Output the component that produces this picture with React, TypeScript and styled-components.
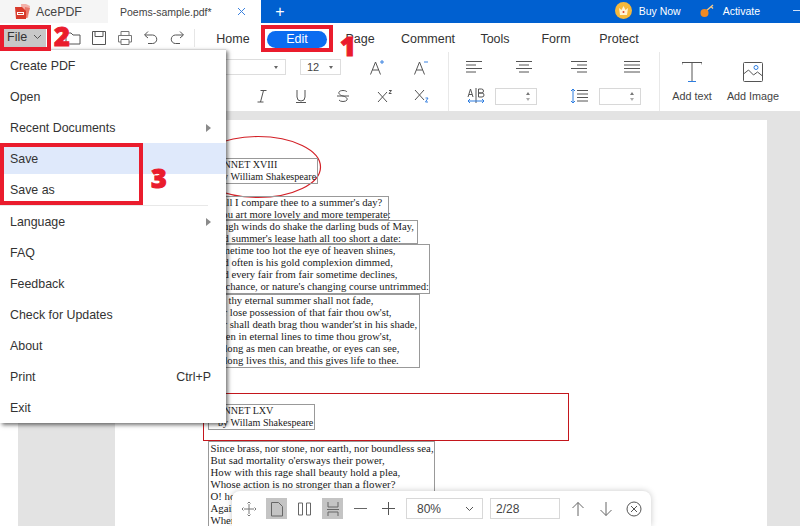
import React from "react";
import styled, { createGlobalStyle } from "styled-components";

const GlobalStyle = createGlobalStyle`
  html, body {
    margin: 0;
    padding: 0;
    background: #fff;
  }
  * {
    box-sizing: border-box;
  }
`;

const Shell = styled.div`
  position: relative;
  width: 800px;
  height: 526px;
  overflow: hidden;
  display: flex;
  flex-direction: column;
  font-family: "Liberation Sans", Arial, sans-serif;
  color: #333;
`;

/* title bar */
const TitleBar = styled.header`
  display: flex;
  align-items: center;
  height: 23px;
  background: #0060d0;
  color: #fff;
  font-size: 10.5px;
`;

const Brand = styled.div`
  display: flex;
  align-items: center;
  gap: 5px;
  width: 108px;
  height: 100%;
  padding-left: 14px;
  background: #f5f5f5;
  color: #444;
  font-size: 12.3px;
`;

const DocTab = styled.div`
  display: flex;
  align-items: center;
  justify-content: space-between;
  width: 153px;
  height: 100%;
  padding: 0 15px 0 12px;
  background: #fff;
  color: #444;
  font-size: 10.5px;
`;

const NewTab = styled.span`
  width: 38px;
  text-align: center;
  font-size: 16px;
`;

const TitleActions = styled.div`
  display: flex;
  align-items: center;
  margin-left: auto;
  padding-bottom: 2px;
`;

const TitleAction = styled.span<{ $gap: number; $right: number }>`
  display: flex;
  align-items: center;
  gap: ${({ $gap }) => $gap}px;
  margin-right: ${({ $right }) => $right}px;
`;

const WindowDash = styled.span`
  width: 7px;
  height: 1px;
  background: #cfe0f7;
`;

/* menu row */
const MenuRow = styled.div`
  display: flex;
  align-items: center;
  height: 29px;
  padding-left: 4px;
`;

const FileButton = styled.div`
  display: flex;
  align-items: center;
  justify-content: space-between;
  width: 42px;
  height: 18px;
  padding: 0 4px 2px 3px;
  background: #c8c8c8;
  font-size: 12.5px;
`;

const QuickIcons = styled.div`
  display: flex;
  gap: 8px;
  margin-left: 18px;
  width: 130px;
`;

const QuickDivider = styled.span`
  width: 1px;
  height: 18px;
  background: #e6e6e6;
  margin-right: 4px;
`;

const Tab = styled.div<{ $width: number; $active?: boolean }>`
  width: ${({ $width }) => $width}px;
  height: 17px;
  margin-top: 3px;
  line-height: 17px;
  text-align: center;
  font-size: 12.5px;
  border-radius: 9px;
  color: ${({ $active }) => ($active ? "#fff" : "#333")};
  background: ${({ $active }) => ($active ? "#0b6cf0" : "transparent")};
`;

/* ribbon */
const Toolbar = styled.div`
  display: flex;
  height: 59px;
  background: #fff;
`;

const ToolGroup = styled.div<{ $width: number }>`
  display: flex;
  flex-direction: column;
  gap: 13px;
  width: ${({ $width }) => $width}px;
  padding-top: 7px;
  border-right: 1px solid #e8e8e8;
`;

const ToolRow = styled.div<{ $end?: boolean; $pad?: number }>`
  display: flex;
  align-items: center;
  height: 16px;
  justify-content: ${({ $end }) => ($end ? "flex-end" : "flex-start")};
  padding: ${({ $end, $pad = 0 }) => ($end ? `0 ${$pad}px 0 0` : `0 0 0 ${$pad}px`)};
`;

const Select = styled.div<{ $width: number; $right?: number }>`
  display: flex;
  align-items: center;
  justify-content: space-between;
  width: ${({ $width }) => $width}px;
  height: 16px;
  margin-right: ${({ $right = 0 }) => $right}px;
  padding: 0 7px 0 6px;
  border: 1px solid #ddd;
  font-size: 11px;
  color: #444;
`;

const Caret = styled.span`
  width: 0;
  height: 0;
  border-left: 2.5px solid transparent;
  border-right: 2.5px solid transparent;
  border-top: 3px solid #666;
`;

const IconCell = styled.div<{ $width: number; $left?: number }>`
  display: flex;
  align-items: center;
  justify-content: center;
  width: ${({ $width }) => $width}px;
  margin-left: ${({ $left = 0 }) => $left}px;
  height: 16px;
`;

const Spinner = styled.div`
  display: flex;
  flex-direction: column;
  align-items: flex-end;
  justify-content: center;
  gap: 3px;
  width: 42px;
  height: 17px;
  padding-right: 6px;
  border: 1px solid #d8d8d8;
`;

const SpinUp = styled.span`
  border-left: 2px solid transparent;
  border-right: 2px solid transparent;
  border-bottom: 3px solid #777;
`;

const SpinDown = styled.span`
  border-left: 2px solid transparent;
  border-right: 2px solid transparent;
  border-top: 3px solid #aaa;
`;

const InsertGroup = styled.div`
  display: flex;
  padding-left: 12px;
`;

const InsertItem = styled.div<{ $width: number; $left?: number }>`
  display: flex;
  flex-direction: column;
  align-items: center;
  gap: 8px;
  width: ${({ $width }) => $width}px;
  margin-left: ${({ $left = 0 }) => $left}px;
  padding-top: 10px;
  font-size: 10.8px;
  color: #444;
`;

/* document area */
const Viewer = styled.main`
  flex: 1;
  display: flex;
  min-height: 0;
  background: #e3e3e3;
`;

const SideRail = styled.div`
  width: 18px;
  background: #fff;
`;

const Sheet = styled.div`
  position: relative;
  width: 652px;
  margin: 9px 0 0 97px;
  background: #fff;
  font-family: "Liberation Serif", "Times New Roman", serif;
  line-height: 12px;
  color: #1a1a1a;
`;

const TextBox = styled.div<{ $x: number; $y: number; $w: number; $h: number; $size: number }>`
  position: absolute;
  left: ${({ $x }) => $x}px;
  top: ${({ $y }) => $y}px;
  width: ${({ $w }) => $w}px;
  height: ${({ $h }) => $h}px;
  padding: 0 0 0 1.5px;
  border: 1px solid #999;
  font-size: ${({ $size }) => $size}px;
  white-space: nowrap;
`;

const RedRect = styled.div`
  position: absolute;
  left: 88px;
  top: 273px;
  width: 366px;
  height: 48px;
  border: 1px solid #c4161c;
`;

const Ellipse = styled.svg`
  position: absolute;
  left: 75px;
  top: 14px;
`;

/* file menu */
const FileMenu = styled.nav`
  position: absolute;
  left: 0;
  top: 49px;
  width: 226px;
  background: #fff;
  border-top: 1px solid #d4d4d4;
  box-shadow: 2px 2px 4px rgba(0, 0, 0, 0.55);
  font-size: 12.4px;
`;

const MenuItem = styled.div<{ $active?: boolean }>`
  display: flex;
  align-items: center;
  justify-content: space-between;
  height: 31px;
  padding: 0 15px 0 10px;
  background: ${({ $active }) => ($active ? "#dfe9fb" : "transparent")};
`;

const MenuDivider = styled.div`
  width: 208px;
  height: 1px;
  background: #e8e8e8;
`;

const SubArrow = styled.span`
  border-top: 4px solid transparent;
  border-bottom: 4px solid transparent;
  border-left: 5px solid #8a8a8a;
`;

/* bottom page bar */
const PageBar = styled.div`
  position: absolute;
  left: 232px;
  bottom: 0;
  display: flex;
  align-items: center;
  gap: 7px;
  width: 419px;
  height: 35px;
  padding: 0 6px;
  background: #fff;
  border-radius: 8px 8px 0 0;
  box-shadow: 0 0 6px rgba(0, 0, 0, 0.22);
`;

const BarButton = styled.div<{ $on?: boolean }>`
  display: flex;
  align-items: center;
  justify-content: center;
  width: 21px;
  height: 21px;
  background: ${({ $on }) => ($on ? "#c4c4c4" : "transparent")};
`;

const BarField = styled.div<{ $width: number }>`
  display: flex;
  align-items: center;
  justify-content: space-between;
  width: ${({ $width }) => $width}px;
  height: 21px;
  padding: 0 8px 0 5px;
  border: 1px solid #d8d8d8;
  font-size: 12px;
  color: #444;
`;

const ZoomValue = styled.span`
  margin-left: 5px;
`;

/* red tutorial marks laid over the screenshot */
const MarkBox = styled.div<{ $x: number; $y: number; $w: number; $h: number }>`
  position: absolute;
  left: ${({ $x }) => $x}px;
  top: ${({ $y }) => $y}px;
  width: ${({ $w }) => $w}px;
  height: ${({ $h }) => $h}px;
  border: 4px solid #ea1c2d;
`;

const MarkNumber = styled.span<{ $x: number; $y: number }>`
  position: absolute;
  left: ${({ $x }) => $x}px;
  top: ${({ $y }) => $y}px;
  font-family: "Open Sans", sans-serif;
  font-weight: 800;
  font-size: 27px;
  line-height: 27px;
  -webkit-text-stroke: 1px #ea1c2d;
  color: #ea1c2d;
`;

const Line = styled.line`
  stroke: currentColor;
`;

const Glyph = ({ w = 18, h = 18, color = "#555", children }: { w?: number; h?: number; color?: string; children: React.ReactNode }) => (
  <svg width={w} height={h} viewBox={`0 0 ${w} ${h}`} fill="none" stroke={color} strokeWidth={1} style={{ color }}>
    {children}
  </svg>
);

const Logo = () => (
  <svg width="17" height="16" viewBox="0 0 17 16">
    <path d="M7 0h5l4 2-2 12-6-1z" fill="#f3b0a8" />
    <path d="M11 3l5 1-3 10-3-1z" fill="#e9786b" />
    <path d="M1 3h7l4 4v8H2z" fill="#d83a2b" />
    <path d="M3 8h7v3H3z" fill="#fff" />
    <path d="M4 9h5v1H4z" fill="#d83a2b" />
  </svg>
);

const Crown = () => (
  <svg width="17" height="17" viewBox="0 0 17 17">
    <circle cx="8.5" cy="8.5" r="8.5" fill="#f6b93b" />
    <path d="M4 6l2.500 2L8.500 4l2 4L13 6l-1 7H5z" fill="#fff3d6" />
    <circle cx="8.500" cy="10" r="1" fill="#e0452c" />
  </svg>
);

const KeyIcon = () => (
  <svg width="16" height="15" viewBox="0 0 16 15">
    <path d="M6 8l7-6M11 3.500l2 2" stroke="#f5c98a" strokeWidth="1.3" fill="none" />
    <circle cx="4.500" cy="10" r="4" fill="#f08a24" />
  </svg>
);

const Chevron = () => (
  <svg width="9" height="6" viewBox="0 0 9 6" fill="none" stroke="#555" strokeWidth="1">
    <path d="M1 1l3.500 3.500L8 1" />
  </svg>
);

const LetterA = ({ mark }: { mark: string }) => (
  <svg width="15" height="16" viewBox="0 0 15 16" fill="none" stroke="#555">
    <path d="M1.500 15.500L6.500 3l5 12.500M3.300 11h6.400" />
    <path d={mark} stroke="#3b82e0" />
  </svg>
);

const TextLines = ({ rows }: { rows: [number, number][] }) => (
  <Glyph w={18} h={14}>
    {rows.map(([x1, x2], i) => (
      <Line key={i} x1={x1} x2={x2} y1={1.5 + i * 3.5} y2={1.5 + i * 3.5} />
    ))}
  </Glyph>
);

const tabs: { label: string; width: number; active?: boolean }[] = [
  { label: "Home", width: 68 },
  { label: "Edit", width: 60, active: true },
  { label: "Page", width: 66 },
  { label: "Comment", width: 70 },
  { label: "Tools", width: 64 },
  { label: "Form", width: 58 },
  { label: "Protect", width: 68 },
];

const sonnetTop = [
  ["Shall I compare thee to a summer's day?", "Thou art more lovely and more temperate:"],
  ["Rough winds do shake the darling buds of May,", "And summer's lease hath all too short a date:"],
  [
    "Sometime too hot the eye of heaven shines,",
    "And often is his gold complexion dimmed,",
    "And every fair from fair sometime declines,",
    "By chance, or nature's changing course untrimmed:",
  ],
  [
    "But thy eternal summer shall not fade,",
    "Nor lose possession of that fair thou ow'st,",
    "Nor shall death brag thou wander'st in his shade,",
    "When in eternal lines to time thou grow'st,",
    "So long as men can breathe, or eyes can see,",
    "So long lives this, and this gives life to thee.",
  ],
];

const titleSize = 10.1;
const upperVerse = 10.65;
const lowerVerse = 10.8;

const boxes = [
  { x: 93, y: 38, w: 110, h: 26, size: titleSize, lines: ["SONNET XVIII", "\u00a0\u00a0\u00a0by William Shakespeare"] },
  { x: 93, y: 76, w: 181, h: 24, size: upperVerse, lines: sonnetTop[0] },
  { x: 93, y: 100, w: 210, h: 24, size: upperVerse, lines: sonnetTop[1] },
  { x: 93, y: 124, w: 222, h: 50, size: upperVerse, lines: sonnetTop[2] },
  { x: 93, y: 174, w: 212, h: 74, size: upperVerse, lines: sonnetTop[3] },
  { x: 93, y: 284, w: 107, h: 26, size: titleSize, lines: ["SONNET LXV", "\u00a0\u00a0\u00a0by Willam Shakespeare"] },
  {
    x: 93,
    y: 321,
    w: 227,
    h: 100,
    size: lowerVerse,
    lines: [
      "Since brass, nor stone, nor earth, nor boundless sea,",
      "But sad mortality o'ersways their power,",
      "How with this rage shall beauty hold a plea,",
      "Whose action is no stronger than a flower?",
      "O! how shall summer's honey breath hold out,",
      "Against the wrackful siege of battering days,",
      "When rocks impregnable are not so stout,",
    ],
  },
];

const menuBefore = ["Create PDF", "Open"];
const menuAfter = ["FAQ", "Feedback", "Check for Updates", "About"];

export default function App() {
  return (
    <Shell>
      <GlobalStyle />
      <TitleBar>
        <Brand>
          <Logo />
          AcePDF
        </Brand>
        <DocTab>
          Poems-sample.pdf*
          <svg width="9" height="9" viewBox="0 0 9 9" stroke="#3b82e0" fill="none">
            <path d="M1 1l7 7M8 1l-7 7" />
          </svg>
        </DocTab>
        <NewTab>+</NewTab>
        <TitleActions>
          <TitleAction $gap={7} $right={19}>
            <Crown />
            Buy Now
          </TitleAction>
          <TitleAction $gap={7} $right={33}>
            <KeyIcon />
            Activate
          </TitleAction>
          <WindowDash />
        </TitleActions>
      </TitleBar>

      <MenuRow>
        <FileButton>
          File
          <Chevron />
        </FileButton>
        <QuickIcons>
          <Glyph>
            <path d="M2 15V4h5l2 2h7v9z" />
          </Glyph>
          <Glyph>
            <path d="M2.500 2.500h13v13h-13zM5 2.500v5h8v-5" />
          </Glyph>
          <Glyph color="#777">
            <path d="M5 6V2.500h8V6M5 13H2.500V6.500h13V13H13M5 10.500h8v5H5z" />
          </Glyph>
          <Glyph>
            <path d="M6 2.500L2.500 6 6 9M3 6h7.500a4 4 0 010 8.500H6" />
          </Glyph>
          <Glyph>
            <path d="M12 2.500L15.500 6 12 9M15 6H7.500a4 4 0 000 8.500H12" />
          </Glyph>
        </QuickIcons>
        <QuickDivider />
        {tabs.map((tab) => (
          <Tab key={tab.label} $width={tab.width} $active={tab.active}>
            {tab.label}
          </Tab>
        ))}
      </MenuRow>

      <Toolbar>
        <ToolGroup $width={449}>
          <ToolRow $end $pad={6}>
            <Select $width={120} $right={14}>
              <span />
              <Caret />
            </Select>
            <Select $width={41} $right={13}>
              12
              <Caret />
            </Select>
            <IconCell $width={44}>
              <LetterA mark="M11 3h4M13 1v4" />
            </IconCell>
            <IconCell $width={44}>
              <LetterA mark="M11 3h4" />
            </IconCell>
          </ToolRow>
          <ToolRow $end $pad={6}>
            <IconCell $width={44}>
              <Glyph w={14} h={14}>
                <path d="M5.500 1.500h6M2.500 13h6M8.500 1.500L5.500 13" />
              </Glyph>
            </IconCell>
            <IconCell $width={34}>
              <Glyph w={14} h={14}>
                <path d="M3 1v7a4 4 0 008 0V1M2 13.500h10" />
              </Glyph>
            </IconCell>
            <IconCell $width={50}>
              <Glyph w={14} h={14}>
                <path d="M11 3c-1-2-7-2-8 0s2 3.500 4 4 5 2 4 4-7 2-8 0M1 7h12" />
              </Glyph>
            </IconCell>
            <IconCell $width={34}>
              <Glyph w={16} h={14}>
                <path d="M1 3l9 10M10 3L1 13M12 1.500h2.500l-2.500 3h2.500" />
              </Glyph>
            </IconCell>
            <IconCell $width={40}>
              <Glyph w={16} h={14}>
                <path d="M1 1l9 10M10 1L1 11" />
                <path d="M11.500 9h2.500l-2.500 4H14" stroke="#3b82e0" />
              </Glyph>
            </IconCell>
          </ToolRow>
        </ToolGroup>

        <ToolGroup $width={211}>
          <ToolRow>
            <IconCell $width={49}>
              <TextLines rows={[[1, 17], [1, 11], [1, 17], [1, 11]]} />
            </IconCell>
            <IconCell $width={52}>
              <TextLines rows={[[1, 17], [4, 14], [1, 17], [4, 14]]} />
            </IconCell>
            <IconCell $width={58}>
              <TextLines rows={[[1, 17], [7, 17], [1, 17], [7, 17]]} />
            </IconCell>
            <IconCell $width={48}>
              <TextLines rows={[[1, 17], [1, 17], [1, 17], [1, 17]]} />
            </IconCell>
          </ToolRow>
          <ToolRow $pad={8}>
            <IconCell $width={38}>
              <Glyph w={18} h={16}>
                <path d="M9 0v15" />
                <path d="M1 9l2.500-8L6 9M2 6.500h3M11.500 1v8M11.500 1h3a2 2 0 010 4h-3M11.500 5h3.500a2 2 0 010 4h-3.500" />
                <path d="M1 13h16M3 11l-2 2 2 2M15 11l2 2-2 2" stroke="#2d7de0" />
              </Glyph>
            </IconCell>
            <Spinner>
              <SpinUp />
              <SpinDown />
            </Spinner>
            <IconCell $width={40} $left={22}>
              <Glyph w={18} h={16}>
                <path d="M7 2.500h11M7 6h11M7 9.500h11M7 13h11" />
                <path d="M3 1v14M1 3l2-2 2 2M1 13l2 2 2-2" stroke="#2d7de0" />
              </Glyph>
            </IconCell>
            <Spinner>
              <SpinUp />
              <SpinDown />
            </Spinner>
          </ToolRow>
        </ToolGroup>

        <InsertGroup>
          <InsertItem $width={40}>
            <svg width="20" height="20" viewBox="0 0 20 20" fill="none" stroke="#555">
              <path d="M0 .5h20M0 .5v2M20 .5v2M10 .5v19" />
              <path d="M6 19.500h8" stroke="#2d7de0" />
            </svg>
            Add text
          </InsertItem>
          <InsertItem $width={54} $left={14}>
            <svg width="20" height="20" viewBox="0 0 20 20" fill="none" stroke="#555">
              <rect x=".5" y=".5" width="19" height="19" rx="1" />
              <path d="M.5 12l5-4 5 5 4-3 5 4" />
              <circle cx="13" cy="5.500" r="2" stroke="#2d7de0" />
            </svg>
            Add Image
          </InsertItem>
        </InsertGroup>
      </Toolbar>

      <Viewer>
        <SideRail />
        <Sheet>
          <Ellipse width="134" height="66" viewBox="0 0 134 66" fill="none" stroke="#d32027" strokeWidth="1.2">
            <ellipse cx="68" cy="33" rx="62.500" ry="30.500" />
          </Ellipse>
          <RedRect />
          {boxes.map((box) => (
            <TextBox key={box.y} $x={box.x} $y={box.y} $w={box.w} $h={box.h} $size={box.size}>
              {box.lines.map((line) => (
                <div key={line}>{line}</div>
              ))}
            </TextBox>
          ))}
        </Sheet>
      </Viewer>

      <FileMenu>
        {menuBefore.map((item) => (
          <MenuItem key={item}>{item}</MenuItem>
        ))}
        <MenuItem>
          Recent Documents
          <SubArrow />
        </MenuItem>
        <MenuItem $active>Save</MenuItem>
        <MenuItem>Save as</MenuItem>
        <MenuDivider />
        <MenuItem>
          Language
          <SubArrow />
        </MenuItem>
        {menuAfter.map((item) => (
          <MenuItem key={item}>{item}</MenuItem>
        ))}
        <MenuItem>
          Print
          <span>Ctrl+P</span>
        </MenuItem>
        <MenuItem>Exit</MenuItem>
      </FileMenu>

      <PageBar>
        <BarButton>
          <Glyph w={16} h={16} color="#777">
            <path d="M8 3v10M3 8h10M6.500 2.500L8 1l1.500 1.500M6.500 13.500L8 15l1.500-1.500M2.500 6.500L1 8l1.500 1.500M13.500 6.500L15 8l-1.500 1.500" />
          </Glyph>
        </BarButton>
        <BarButton $on>
          <Glyph w={12} h={16} color="#666">
            <path d="M.5 1.500h7l4 4v9.500h-11z" />
          </Glyph>
        </BarButton>
        <BarButton>
          <Glyph w={13} h={16} color="#666">
            <path d="M.5 2h4v12h-4zM8.500 2h4v12h-4z" />
          </Glyph>
        </BarButton>
        <BarButton $on>
          <Glyph w={14} h={16} color="#666">
            <path d="M2 1v5h10V1M1 8.500h12M2 15v-4h10v4" />
          </Glyph>
        </BarButton>
        <BarButton>
          <Glyph w={15} h={15} color="#666">
            <path d="M1 7.500h13" />
          </Glyph>
        </BarButton>
        <BarButton>
          <Glyph w={15} h={15} color="#555">
            <path d="M1 7.500h13M7.500 1v13" />
          </Glyph>
        </BarButton>
        <BarField $width={77}>
          <ZoomValue>80%</ZoomValue>
          <Chevron />
        </BarField>
        <BarField $width={70}>2/28</BarField>
        <BarButton>
          <Glyph w={14} h={16} color="#666">
            <path d="M7 15V1.500M1.500 7L7 1.500 12.500 7" />
          </Glyph>
        </BarButton>
        <BarButton>
          <Glyph w={14} h={16} color="#666">
            <path d="M7 1v13.500M1.500 9L7 14.500 12.500 9" />
          </Glyph>
        </BarButton>
        <BarButton>
          <Glyph w={16} h={16} color="#555">
            <circle cx="8" cy="8" r="7" />
            <path d="M5 5l6 6M11 5l-6 6" />
          </Glyph>
        </BarButton>
      </PageBar>

      <MarkBox $x={0} $y={25} $w={51} $h={26} />
      <MarkBox $x={261} $y={25} $w={72} $h={27} />
      <MarkBox $x={0} $y={143} $w={143} $h={62} />
      <MarkNumber $x={54} $y={22}>2</MarkNumber>
      <MarkNumber $x={340} $y={32}>1</MarkNumber>
      <MarkNumber $x={151} $y={164}>3</MarkNumber>
    </Shell>
  );
}
